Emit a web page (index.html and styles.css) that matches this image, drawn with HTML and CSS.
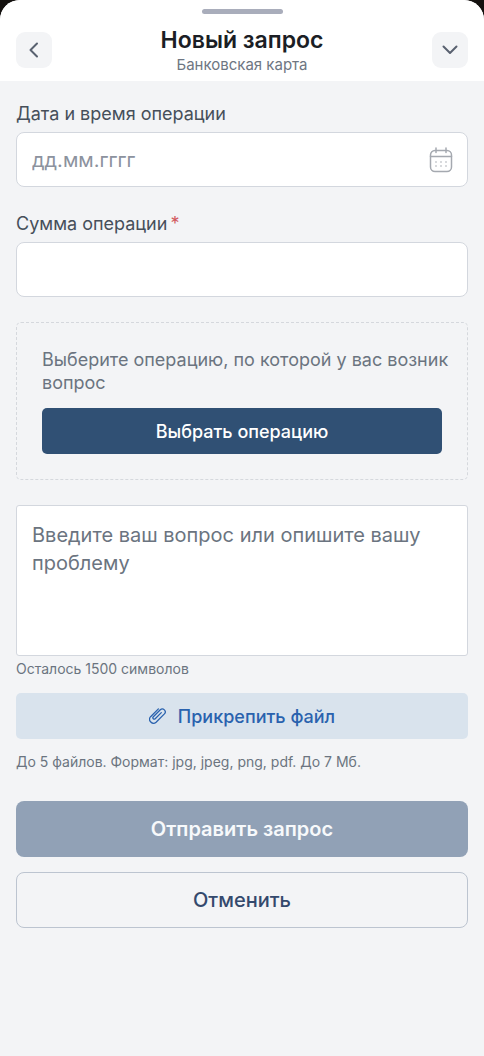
FILE: index.html
```html
<!DOCTYPE html>
<html lang="ru">
<head>
<meta charset="utf-8">
<meta name="viewport" content="width=device-width, initial-scale=1">
<title>Новый запрос</title>
<link rel="stylesheet" href="styles.css">
</head>
<body>
<div class="sheet">
  <header class="header">
    <span class="handle"></span>
    <div class="header-row">
      <button class="nav-button" type="button" aria-label="Назад">
        <svg width="20" height="20" viewBox="0 0 20 20"><path d="M13 3.5 6.5 10l6.5 6.5"/></svg>
      </button>
      <div class="heading">
        <h1 class="title">Новый запрос</h1>
        <p class="subtitle">Банковская карта</p>
      </div>
      <button class="nav-button" type="button" aria-label="Свернуть">
        <svg width="20" height="20" viewBox="0 0 20 20"><path d="M3.5 6.500 10 13l6.500-6.500"/></svg>
      </button>
    </div>
  </header>
  <form class="form">
    <div class="field">
      <label class="label" for="date">Дата и время операции</label>
      <div class="control">
        <input class="input" id="date" type="text" placeholder="дд.мм.гггг">
        <svg class="calendar" width="24" height="26" viewBox="0 0 24 26" aria-hidden="true">
          <rect x="1.500" y="3.500" width="21" height="21" rx="4.500"/>
          <path d="M1.500 9.500h21M7 1v4.500M17 1v4.500"/>
          <path class="dots" d="M7 15h.01M12 15h.01M17 15h.01M7 19h.01M12 19h.01M17 19h.01"/>
        </svg>
      </div>
    </div>
    <div class="field">
      <label class="label" for="amount">Сумма операции<span class="required">*</span></label>
      <div class="control">
        <input class="input" id="amount" type="text">
      </div>
    </div>
    <section class="picker">
      <p class="picker-text">Выберите операцию, по которой у вас возник вопрос</p>
      <button class="button button-pick" type="button">Выбрать операцию</button>
    </section>
    <div class="message">
      <textarea class="textarea" id="question" aria-label="Вопрос" placeholder="Введите ваш вопрос или опишите вашу проблему"></textarea>
      <p class="note">Осталось 1500 символов</p>
    </div>
    <div class="attach">
      <button class="button button-attach" type="button">
        <svg class="clip" width="18" height="18" viewBox="0 0 18 18" aria-hidden="true">
          <path d="M12.300 5.600 6.200 11.700a1.300 1.300 0 0 1-1.900-1.900l7-7a2.900 2.900 0 0 1 4.100 4.100l-8.300 8.300a3.900 3.900 0 0 1-5.500-5.500L9.400 1.900"/>
        </svg>
        Прикрепить файл
      </button>
      <p class="note">До 5 файлов. Формат: jpg, jpeg, png, pdf. До 7 Мб.</p>
    </div>
    <div class="actions">
      <button class="button button-submit" type="submit" disabled>Отправить запрос</button>
      <button class="button button-cancel" type="button">Отменить</button>
    </div>
  </form>
</div>
</body>
</html>
```
FILE: styles.css
```css
* {
  box-sizing: border-box;
}

body {
  margin: 0;
  background: #14110f;
  font-family: Inter, "Noto Sans", sans-serif;
  color: #4f5863;
}

h1,
p {
  margin: 0;
}

button,
input,
textarea {
  font-family: inherit;
}

.sheet {
  min-height: 100vh;
  overflow: hidden;
  border-radius: 20px 20px 0 0;
  background: #f3f4f6;
}

.header {
  display: flex;
  flex-direction: column;
  align-items: center;
  gap: 11px;
  padding: 9px 16px 7px;
  background: #fff;
}

.handle {
  width: 81px;
  height: 5px;
  border-radius: 3px;
  background: #a9adbb;
}

.header-row {
  display: flex;
  align-items: center;
  justify-content: space-between;
  width: 100%;
}

.nav-button {
  display: flex;
  align-items: center;
  justify-content: center;
  width: 36px;
  height: 36px;
  padding: 0;
  border: 0;
  border-radius: 9px;
  background: #f3f4f6;
}

.nav-button svg {
  fill: none;
  stroke: #596170;
  stroke-width: 2;
  stroke-linecap: round;
  stroke-linejoin: round;
}

.heading {
  text-align: center;
}

.title {
  font-size: 23px;
  line-height: 30px;
  font-weight: 600;
  color: #1b1e25;
}

.subtitle {
  font-size: 15px;
  line-height: 19px;
  color: #6e7682;
}

.form {
  display: flex;
  flex-direction: column;
  gap: 25px;
  padding: 21px 16px;
}

.field {
  display: flex;
  flex-direction: column;
  gap: 7px;
}

.label {
  font-size: 18px;
  line-height: 23px;
  font-weight: 400;
  color: #464f5a;
}

.required {
  margin-left: 3px;
  color: #d25a5f;
}

.control {
  display: flex;
  align-items: center;
  height: 55px;
  padding: 0 14px 0 15px;
  border: 1px solid #d3d7de;
  border-radius: 8px;
  background: #fff;
}

.input {
  flex: 1;
  min-width: 0;
  height: 100%;
  padding: 0;
  border: 0;
  outline: 0;
  background: transparent;
  font-size: 20px;
  color: #4f5863;
}

.input::placeholder {
  color: #8c929e;
  opacity: 1;
}

.calendar {
  fill: none;
  stroke: #a5a9b0;
  stroke-width: 1.5;
  stroke-linecap: round;
}

.dots {
  stroke-width: 1.6;
}

.picker {
  display: flex;
  flex-direction: column;
  gap: 14px;
  padding: 25px;
  border: 1px dashed #d5d8dd;
  border-radius: 5px;
}

.picker-text {
  margin-right: -12px;
  font-size: 18px;
  line-height: 23px;
  color: #6b7480;
}

.button {
  display: flex;
  align-items: center;
  justify-content: center;
  width: 100%;
  height: 46px;
  padding: 0;
  border: 0;
  border-radius: 5px;
  font-size: 18px;
  font-weight: 500;
}

.button-pick {
  background: #305074;
  color: #fff;
}

.message {
  display: flex;
  flex-direction: column;
  gap: 4px;
}

.textarea {
  display: block;
  width: 100%;
  height: 151px;
  padding: 15px;
  border: 1px solid #d3d7de;
  border-radius: 3px;
  outline: 0;
  resize: none;
  background: #fff;
  font-size: 20px;
  line-height: 28px;
  color: #4f5863;
}

.textarea::placeholder {
  color: #6b7480;
  opacity: 1;
}

.note {
  font-size: 14px;
  line-height: 18px;
  color: #6b7480;
}

.attach {
  display: flex;
  flex-direction: column;
  gap: 14px;
  margin-top: -10px;
}

.button-attach {
  gap: 11px;
  background: #d9e3ed;
  color: #2a62ae;
}

.clip {
  fill: none;
  stroke: currentColor;
  stroke-width: 1.3;
  stroke-linecap: round;
  stroke-linejoin: round;
}

.actions {
  display: flex;
  flex-direction: column;
  gap: 15px;
  margin-top: 5px;
}

.button-submit,
.button-cancel {
  height: 56px;
  border-radius: 8px;
  font-size: 20px;
}

.button-submit {
  background: #91a1b6;
  font-weight: 600;
  color: #f7f9fb;
}

.button-cancel {
  border: 1px solid #bcc4d0;
  background: transparent;
  color: #34496d;
}
```
